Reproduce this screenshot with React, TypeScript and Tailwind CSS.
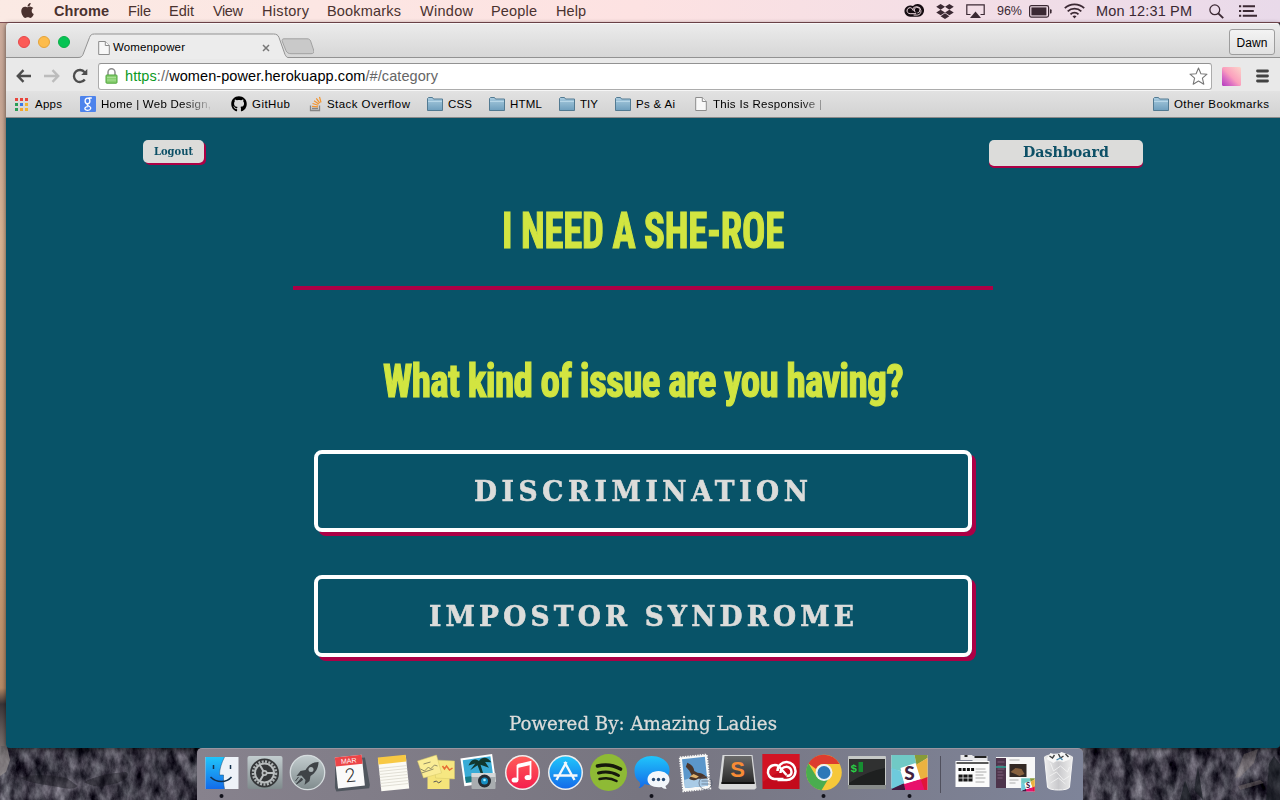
import { useLayoutEffect, useRef } from 'react';
import type { ReactNode } from 'react';
import { FaApple, FaDropbox, FaGithub } from 'react-icons/fa';

/* Text set to an exact measure: `squeeze` narrows the glyphs, tracking takes up the rest.
   Without `squeeze` and with `scale`, the glyphs alone are narrowed. */
function Fit({ width, squeeze = 1, scale = false, className = '', children }: {
  width: number;
  squeeze?: number;
  scale?: boolean;
  className?: string;
  children: ReactNode;
}) {
  const ref = useRef<HTMLSpanElement>(null);
  useLayoutEffect(() => {
    const el = ref.current;
    if (!el) return;
    el.style.letterSpacing = scale ? '' : '0px';
    el.style.transform = 'none';
    const natural = el.getBoundingClientRect().width;
    if (scale) {
      el.style.transform = `scaleX(${width / natural})`;
      return;
    }
    const count = Math.max(1, (el.textContent ?? '').length - 1);
    el.style.letterSpacing = `${(width / squeeze - natural) / count}px`;
    el.style.transform = squeeze === 1 ? 'none' : `scaleX(${squeeze})`;
  }, [width, squeeze, scale]);
  return (
    <span className={`block shrink-0 ${className}`} style={{ width }}>
      <span ref={ref} className="inline-block origin-left whitespace-pre">{children}</span>
    </span>
  );
}

function Wallpaper() {
  return (
    <svg className="absolute inset-0" width="1280" height="800">
      <defs>
        <linearGradient id="sky" x1="0" y1="0" x2="0" y2="1">
          <stop offset="0" stopColor="#cfae9f" />
          <stop offset=".12" stopColor="#c5a594" />
          <stop offset=".3" stopColor="#d6b190" />
          <stop offset=".6" stopColor="#cfa27a" />
          <stop offset=".86" stopColor="#b58a66" />
          <stop offset=".88" stopColor="#3a3538" />
          <stop offset=".92" stopColor="#6c6260" />
          <stop offset="1" stopColor="#b3a8a2" />
        </linearGradient>
        <filter id="rock" x="0" y="0" width="100%" height="100%" colorInterpolationFilters="sRGB">
          <feTurbulence type="fractalNoise" baseFrequency=".09 .05" numOctaves="5" seed="21" />
          <feColorMatrix values=".8 .05 0 0 -.17  .8 .02 0 0 -.165  .8 .04 0 0 -.13  0 0 0 0 1" />
        </filter>
      </defs>
      <rect width="1280" height="800" fill="#2f303a" />
      <rect width="8" height="800" fill="url(#sky)" />
      <rect y="746" width="1280" height="54" filter="url(#rock)" />
      <path d="M0 746h7l3 14-4 12-6 4z" fill="#a39c9a" opacity=".6" />
      <path d="M20 778c12-4 28-4 46 0 6 3 8 6 12 8-6 4-10 3-20 1s-26-3-38-9zM84 782c14-7 28-9 42-10 4 2 2 8-12 12-10 2-18 5-30-2z" fill="#16171c" opacity=".45" />
      <path d="M1244 754l14-5-4 14-14 14-5 1zM1238 786l22-6 4 3-24 7z" fill="#988d86" opacity=".35" />
      <path d="M1180 800l5-20 7 20zM1194 790l4-24 5 34zM1266 800l3-36 5-8 6 8v36z" fill="#11151a" opacity=".6" />
    </svg>
  );
}

function MenuBar() {
  const items: [string, number, string][] = [
    ['File', 23, 'ml-[19px]'],
    ['Edit', 25, 'ml-[18px]'],
    ['View', 30, 'ml-[19px]'],
    ['History', 47, 'ml-[19px]'],
    ['Bookmarks', 74, 'ml-[18px]'],
    ['Window', 53, 'ml-[19px]'],
    ['People', 46, 'ml-[18px]'],
    ['Help', 30, 'ml-[19px]'],
  ];
  return (
    <header className="relative flex h-[23px] items-center border-b border-[#7f4f55] bg-linear-to-r from-[#fbeae4] via-[#fde2e2] to-[#e9daea] pl-[20px] text-[14.500px] leading-[22px] text-[#4a322f]">
      <FaApple className="h-[17px] w-[15px] shrink-0 -translate-y-px" />
      <Fit width={55} className="ml-[19px] font-bold">Chrome</Fit>
      {items.map(([t, w, m]) => (
        <Fit key={t} width={w} className={m}>{t}</Fit>
      ))}
      <div className="ml-auto flex h-full items-center pr-[22px] text-[#3b2933]">
        <svg width="20" height="14" viewBox="0 0 20 14" fill="none">
          <path d="M13.4 0A6 6 0 0 0 9 2 4.6 4.6 0 0 0 6 1.5a5.6 5.6 0 0 0 0 11.2h8A6.3 6.3 0 0 0 13.4 0z" fill="#160d12" />
          <path d="M12.2 9.7H6.1a3 3 0 1 1 1.6-5.5l4 4.2" stroke="#f1dbe1" strokeWidth="1" />
          <path d="M8.4 6.3a4.3 4.3 0 1 1 5 4.8H9.6M10.4 7a2.8 2.8 0 1 1 3 1.9" stroke="#f1dbe1" strokeWidth=".9" />
        </svg>
        <FaDropbox className="ml-[12px] h-[17px] w-[18px]" />
        <svg className="ml-[12px]" width="19" height="15" viewBox="0 0 19 15">
          <path d="M4.5 10.5H.8V.8h17.4v9.7h-3.7" fill="none" stroke="currentColor" strokeWidth="1.2" />
          <path d="M9.5 7.5 15 14H4z" fill="currentColor" />
        </svg>
        <Fit width={25} className="ml-[12px] text-[12.500px]">96%</Fit>
        <svg className="ml-[7px]" width="23" height="13" viewBox="0 0 23 13">
          <rect x=".6" y=".6" width="19" height="11.5" rx="1.8" fill="none" stroke="currentColor" strokeWidth="1.2" />
          <rect x="2.4" y="2.4" width="15" height="8" fill="currentColor" />
          <path d="M21 4.2h.6a1 1 0 0 1 1 1v2.3a1 1 0 0 1-1 1H21z" fill="currentColor" />
        </svg>
        <svg className="ml-[12px]" width="21" height="16" viewBox="0 0 21 16" fill="none" stroke="currentColor" strokeWidth="1.8">
          <path d="M.8 5.2a14 14 0 0 1 19.4 0M3.7 8.3a9.8 9.8 0 0 1 13.6 0M6.5 11.3a5.8 5.8 0 0 1 8 0" />
          <path d="m10.5 15.5-2-2.2a3 3 0 0 1 4 0z" fill="currentColor" stroke="none" />
        </svg>
        <Fit width={96} className="ml-[11px]">Mon 12:31 PM</Fit>
        <svg className="ml-[17px]" width="15" height="15" viewBox="0 0 15 15" fill="none" stroke="currentColor">
          <circle cx="5.8" cy="5.8" r="4.9" strokeWidth="1.3" />
          <path d="m9.3 9.3 4.9 4.9" strokeWidth="1.9" />
        </svg>
        <svg className="ml-[15px]" width="19" height="12" viewBox="0 0 19 12" fill="currentColor">
          <path d="M0 .3h2.2v2H0zM0 5h2.2v2H0zM0 9.7h2.2v2H0zM3.8.3H16v2H3.8zM3.8 5h11v2h-11zM3.8 9.7H18v2H3.8z" />
        </svg>
      </div>
    </header>
  );
}

function PageIcon({ className = '' }: { className?: string }) {
  return (
    <svg className={`shrink-0 ${className}`} width="12" height="14" viewBox="0 0 12 14" fill="#f8f8f8" stroke="#8c8c8c">
      <path d="M.7.5h6.6l4 4v9H.7z" />
      <path d="M7.3.5v4h4" />
    </svg>
  );
}

function Folder({ className = '' }: { className?: string }) {
  return (
    <svg className={`shrink-0 ${className}`} width="16" height="14" viewBox="0 0 16 14">
      <defs>
        <linearGradient id="folder" x1="0" y1="0" x2="0" y2="1">
          <stop offset="0" stopColor="#a9cbdf" />
          <stop offset="1" stopColor="#6f9fbd" />
        </linearGradient>
      </defs>
      <path d="M.5 13.5v-12l1-1h4l1 1.5h9v11.500z" fill="url(#folder)" stroke="#527a92" />
      <path d="M1 4.500h14" stroke="#b8d7e8" />
    </svg>
  );
}

function TabStrip() {
  return (
    <div className="flex h-[35px] bg-linear-to-b from-[#ececec] to-[#d6d6d6] shadow-[inset_0_-1px_0_#929292,inset_0_1px_0_#f8f8f8]">
      <div className="flex items-center gap-[8px] pt-[3px] pl-[12px]">
        <i className="size-[12px] rounded-full border border-[#e6484a] bg-[#fc5b57]" />
        <i className="size-[12px] rounded-full border border-[#e5a33a] bg-[#fdbc4c]" />
        <i className="size-[12px] rounded-full border border-[#0cae48] bg-[#06c454]" />
      </div>
      <div className="relative ml-[4px] h-[36px] w-[214px]">
        <svg className="absolute inset-0" width="214" height="36">
          <path d="M4 34.500c3 0 4-1 5-3L15.500 14.500c1-2.500 2-3.500 5-3.500h179c3 0 4.500 1 5.500 3.500l6 17c1 2 2 3 3 3v1.500H4z" fill="#ececec" />
          <path d="M4 34.500c3 0 4-1 5-3L15.500 14.500c1-2.500 2-3.500 5-3.500h179c3 0 4.500 1 5.500 3.500l6 17c1 2 2 3 3 3" fill="none" stroke="#929292" />
        </svg>
        <div className="relative flex h-full items-center pt-[13px] pl-[24px]">
          <PageIcon />
          <Fit width={72} className="ml-[3px] text-[11.500px] text-black">Womenpower</Fit>
          <svg className="ml-[77px]" width="8" height="8" viewBox="0 0 8 8" stroke="#777" strokeWidth="1.500">
            <path d="m1 1 6 6M7 1 1 7" />
          </svg>
        </div>
      </div>
      <svg className="mt-[15px] -ml-[7px]" width="33" height="18" viewBox="0 0 33 18">
        <path d="M3 .800h23c2 0 3 .700 3.600 2.200l3 9c.700 2.500 0 3.700-2.600 3.700H10c-2.500 0-4-1-5-3L1.500 4C.600 2 1.200.800 3 .800z" fill="#c9c9c9" stroke="#a1a1a1" />
      </svg>
      <div className="mt-[6px] mr-[5px] ml-auto flex h-[26px] w-[46px] items-center justify-center rounded-[3px] border border-[#9d9d9d] bg-linear-to-b from-[#f3f3f3] to-[#e2e2e2] pt-px">
        <Fit width={31} className="text-[12px] text-black">Dawn</Fit>
      </div>
    </div>
  );
}

function Toolbar() {
  return (
    <div className="flex h-[33px] items-center bg-[#e9e9e9] pt-[3px] pl-[10px]">
      <svg width="16" height="14" viewBox="0 0 16 14" fill="none" stroke="#4d4d4d" strokeWidth="2.400">
        <path d="M15 7H2M7.500 1.200 1.800 7l5.700 5.800" />
      </svg>
      <svg className="ml-[12px]" width="16" height="14" viewBox="0 0 16 14" fill="none" stroke="#bcbcbc" strokeWidth="2.400">
        <path d="M0 7h14M8.500 1.200 14.200 7l-5.700 5.800" />
      </svg>
      <svg className="ml-[12px]" width="16" height="16" viewBox="0 0 16 16">
        <path d="M12.800 11.500a6 6 0 1 1-.200-7.300" fill="none" stroke="#4d4d4d" strokeWidth="2.300" />
        <path d="M15.300.900V7H9.200z" fill="#4d4d4d" />
      </svg>
      <div className="ml-[10px] flex h-[27px] w-[1114px] items-center rounded-[3px] border border-[#acacac] border-t-[#929292] bg-white pl-[6px] shadow-[0_1px_0_#f6f6f6]">
        <svg width="13" height="16" viewBox="0 0 13 16">
          <path d="M3 7.500V4.200a3.500 3.500 0 0 1 7 0v3.300" fill="none" stroke="#8d8d8d" strokeWidth="1.500" />
          <rect x="1" y="7" width="11" height="8.200" rx=".8" fill="#88cf70" stroke="#4fa53c" />
          <path d="M2 9.500h9M2 12h9" stroke="#a8df94" />
        </svg>
        <Fit width={313} className="ml-[7px] pt-px text-[14.500px] text-[#666]">
          <span className="text-[#0b9a24]">https</span>://<span className="text-black">women-power.herokuapp.com</span>/#/category
        </Fit>
        <svg className="mr-[3px] ml-auto" width="19" height="19" viewBox="0 0 19 19" fill="#fff" stroke="#777" strokeWidth="1.100" strokeLinejoin="round">
          <path d="m9.500 1 2.400 5.700 6.100.500-4.600 4 1.400 6-5.300-3.200-5.300 3.200 1.400-6L1 7.200l6.100-.500z" />
        </svg>
      </div>
      <svg className="ml-[10px]" width="19" height="19" viewBox="0 0 19 19">
        <defs>
          <linearGradient id="swatch" x1="0" y1="1" x2="1" y2="0">
            <stop offset="0" stopColor="#b13ac0" />
            <stop offset=".3" stopColor="#dd70c3" />
            <stop offset=".5" stopColor="#fb9fbd" />
            <stop offset="1" stopColor="#fcd5ca" />
          </linearGradient>
        </defs>
        <rect width="19" height="19" rx="1.500" fill="url(#swatch)" />
      </svg>
      <svg className="ml-[15px]" width="13" height="14" viewBox="0 0 13 14" stroke="#424242" strokeWidth="2.800" strokeLinecap="round">
        <path d="M1.500 2h10M1.500 7h10M1.500 12h10" />
      </svg>
    </div>
  );
}

function BookmarksBar() {
  const folders: [string, number, string][] = [
    ['CSS', 24, 'ml-[17px]'],
    ['HTML', 32, 'ml-[17px]'],
    ['TIY', 18, 'ml-[17px]'],
    ['Ps & Ai', 39, 'ml-[17px]'],
  ];
  const dots = ['#e8453c', '#e8453c', '#e8453c', '#2a9d57', '#3b78e7', '#f3b52f', '#2a9d57', '#f3a52f', '#f3b52f'];
  return (
    <div className="flex h-[27px] items-center border-b border-[#8a8a8a] bg-linear-to-b from-[#e2e2e2] to-[#d2d2d2] pr-[11px] pl-[9px] text-[11.500px] text-black">
      <svg width="13" height="13" viewBox="0 0 13 13">
        {dots.map((c, i) => (
          <rect key={i} x={(i % 3) * 5} y={Math.floor(i / 3) * 5} width="3" height="3" fill={c} />
        ))}
      </svg>
      <Fit width={27} className="ml-[7px] pt-px">Apps</Fit>
      <svg className="ml-[18px] shrink-0" width="16" height="16" viewBox="0 0 16 16">
        <rect width="16" height="16" rx="1" fill="#4d83ec" />
        <g fill="none" stroke="#fff" strokeWidth="1.300">
          <ellipse cx="7.500" cy="5" rx="2.400" ry="2.800" />
          <path d="M11.800 2H8.500M8.300 7.600c-2 .900-1.300 1.700.400 2.400 3.200 1.300 2.300 4.300-1 4.300-3.800 0-3.900-3.600.500-3.700" />
        </g>
      </svg>
      <Fit width={110} className="ml-[5px] bg-linear-to-r from-black from-75% to-black/10 bg-clip-text pt-px text-transparent">Home | Web Design,</Fit>
      <FaGithub className="ml-[20px] size-[16px] shrink-0" />
      <Fit width={38} className="ml-[5px] pt-px">GitHub</Fit>
      <svg className="ml-[19px] shrink-0" width="13" height="16" viewBox="0 0 13 16" fill="none">
        <path d="M1.500 9.500v5h9v-5" stroke="#858585" strokeWidth="1.300" />
        <path d="M3 12.500h6" stroke="#858585" strokeWidth="1.300" />
        <path d="m3 10.300 6 .600M3.500 7.500l5.700 1.700M5 4.800 9.800 8M7.300 2.300l3.500 4.900M10.500.800l1.500 5.700" stroke="#f2932e" strokeWidth="1.200" />
      </svg>
      <Fit width={83} className="ml-[5px] pt-px">Stack Overflow</Fit>
      {folders.map(([t, w, m]) => (
        <div key={t} className={`flex items-center ${m}`}>
          <Folder />
          <Fit width={w} className="ml-[5px] pt-px">{t}</Fit>
        </div>
      ))}
      <PageIcon className="ml-[20px]" />
      <Fit width={109} className="ml-[6px] bg-linear-to-r from-black from-80% to-black/30 bg-clip-text pt-px text-transparent">This Is Responsive |</Fit>
      <Folder className="ml-auto" />
      <Fit width={95} className="ml-[5px] pt-px">Other Bookmarks</Fit>
    </div>
  );
}

function CategoryPage() {
  return (
    <main className="flex flex-1 flex-col items-center bg-[#085368] font-['DejaVu_Serif',serif]">
      <div className="mt-[22px] flex h-[26px] w-[1000px] items-start justify-between">
        <button className="flex h-[23px] w-[61px] items-center justify-center rounded-[5px] bg-[#dcdcda] pb-px font-bold text-[#0d5066] shadow-[2px_2px_0_#ac0045]">
          <Fit width={39} scale className="text-[10.500px] leading-none">Logout</Fit>
        </button>
        <button className="flex h-[26px] w-[154px] items-center justify-center rounded-[5px] bg-[#dcdcda] pb-[2px] font-bold text-[#0d5066] shadow-[0_2px_0_#ac0045]">
          <Fit width={86} scale className="text-[15.500px] leading-none">Dashboard</Fit>
        </button>
      </div>
      <h1 className="mt-[35px] font-['Roboto_Condensed','Liberation_Sans_Narrow',Roboto,sans-serif] text-[50px] leading-[60px] font-bold tracking-[-.3px] text-[#d2e541] [-webkit-text-stroke:1.200px_#d2e541]">
        <Fit width={282} scale>I NEED A SHE-ROE</Fit>
      </h1>
      <hr className="mt-[25px] h-[4px] w-[700px] border-0 bg-[#ac0045]" />
      <h2 className="mt-[64px] font-['Roboto_Condensed','Liberation_Sans_Narrow',Roboto,sans-serif] text-[45.500px] leading-[56px] font-bold tracking-[-.8px] text-[#d2e541] [-webkit-text-stroke:1.200px_#d2e541]">
        <Fit width={520} scale>What kind of issue are you having?</Fit>
      </h2>
      <button className="mt-[40px] flex h-[82px] w-[658px] items-center justify-center rounded-[8px] border-4 border-white pr-[4px] font-bold text-[#dcdcda] shadow-[4px_4px_0_#ac0045]">
        <Fit width={334} squeeze={0.93} className="text-[28.500px] [-webkit-text-stroke:.6px_#dcdcda]">DISCRIMINATION</Fit>
      </button>
      <button className="mt-[43px] flex h-[82px] w-[658px] items-center justify-center rounded-[8px] border-4 border-white pr-[4px] font-bold text-[#dcdcda] shadow-[4px_4px_0_#ac0045]">
        <Fit width={425} squeeze={0.93} className="text-[28.500px] [-webkit-text-stroke:.6px_#dcdcda]">IMPOSTOR SYNDROME</Fit>
      </button>
      <footer className="mt-[52px] text-[18.500px] leading-[30px] text-[#dcdcda]">
        <Fit width={268} scale className="[-webkit-text-stroke:.3px_#dcdcda]">Powered By: Amazing Ladies</Fit>
      </footer>
    </main>
  );
}

function Slot({ running = false, children }: { running?: boolean; children: ReactNode }) {
  return (
    <svg className="shrink-0" width="43" height="52" viewBox="-21.500 0 43 52">
      {children}
      {running && <circle cx="0" cy="48" r="2" fill="#11111a" />}
    </svg>
  );
}

function SlackMark() {
  return (
    <g>
      <path d="M-18 7H18V42H-18z" fill="#fff" />
      <path d="M-18 7H5L7 17-9 23-18 21z" fill="#70c9c5" />
      <path d="M5 7h13v3L7 17z" fill="#879b38" />
      <path d="M18 10v20l-7 2L6 17z" fill="#ecb240" />
      <path d="M18 29v13H14L10 32z" fill="#e01538" />
      <path d="M15 42H-4l-3-6 18-5z" fill="#e8116c" />
      <path d="M-4 42h-14v-2l12-5z" fill="#421a40" />
      <path d="M-18 20l9 3 4 12-13 6z" fill="#6ecadc" />
      <path d="M-9 20 6 15l5 16-16 5z" fill="#fff" />
    </g>
  );
}

function Dock() {
  return (
    <div className="flex h-[52px] w-[886px] rounded-t-[5px] border-t border-[#9995a0] bg-linear-to-r from-[#87828d] via-[#777580] to-[#7e8499] pl-[2.500px] *:-mt-px">
      <svg width="0" height="0" className="absolute">
        <defs>
          <linearGradient id="blue" x1="0" y1="0" x2="0" y2="1"><stop offset="0" stopColor="#20c5fb" /><stop offset="1" stopColor="#136be9" /></linearGradient>
          <linearGradient id="metal" x1="0" y1="0" x2="0" y2="1"><stop offset="0" stopColor="#c3cdcf" /><stop offset="1" stopColor="#808b8d" /></linearGradient>
          <linearGradient id="red" x1="0" y1="0" x2="0" y2="1"><stop offset="0" stopColor="#ff5c58" /><stop offset="1" stopColor="#f51f4d" /></linearGradient>
          <linearGradient id="dark" x1="0" y1="0" x2="0" y2="1"><stop offset="0" stopColor="#6b6b6b" /><stop offset="1" stopColor="#252525" /></linearGradient>
          <linearGradient id="bin" x1="0" y1="0" x2="1" y2="0"><stop offset="0" stopColor="#eee" /><stop offset=".5" stopColor="#c9c9cc" /><stop offset="1" stopColor="#eee" /></linearGradient>
        </defs>
      </svg>
      <Slot running>
        <rect x="-16" y="9" width="33" height="32" fill="#eef2f8" />
        <path d="M-16 9H3C0 15-2 21-2 27h4c0 5 0 9 1 14h-19z" fill="url(#blue)" />
        <path d="M-8 17v4M9 17v4" stroke="#12304c" strokeWidth="1.500" />
        <path d="M3 9c-3 6-5 12-5 18h4c0 5 0 9 1 14" fill="none" stroke="#1b4b70" strokeWidth=".5" />
        <path d="M-11 29c6 6 16 6 21 0" fill="none" stroke="#12304c" strokeWidth="1.500" />
      </Slot>
      <Slot>
        <rect x="-17" y="8" width="35" height="33" rx="2" fill="url(#metal)" />
        <circle cy="25" r="14.500" fill="#353739" />
        <circle cy="25" r="11.500" fill="none" stroke="#aeb3b4" strokeWidth="2.500" strokeDasharray="2 1.400" />
        <circle cy="25" r="9.500" fill="none" stroke="#b9bdbe" strokeWidth="2" />
        <circle cy="25" r="3" fill="#b9bdbe" />
        <path d="M0 25h10M0 25l-5-8.500M0 25l-5 8.500" stroke="#b9bdbe" strokeWidth="2" />
        <circle cy="25" r="1.300" fill="#444" />
      </Slot>
      <Slot>
        <circle cy="24.500" r="17.200" fill="url(#metal)" stroke="#d6dcde" strokeWidth="1.300" />
        <path d="M11 14c-6 0-10 3-13 8l-5 1-4 5 5-.5 4 4.500-1 5 5-4 1-5c5-3 8-8 8-14z" fill="#3f4347" />
        <circle cx="3.500" cy="21.500" r="2.500" fill="#aab3b5" />
        <path d="m-6 30-5 6 6-4zM-9 29l-3 4" fill="#3f4347" stroke="#3f4347" />
      </Slot>
      <Slot>
        <g transform="rotate(-6 0 25)">
          <path d="M-14 11h30l2 28-1 3h-33l-1-4z" fill="#50565e" />
          <rect x="-14" y="8" width="27" height="31" fill="#fafafa" />
          <rect x="-14" y="8" width="27" height="9" fill="#ec4548" />
          <text x="-.5" y="15.200" fontSize="7" textAnchor="middle" fill="#fff" fontFamily="Liberation Sans">MAR</text>
          <text x="-.5" y="34" fontSize="19" textAnchor="middle" fill="#333" fontFamily="Roboto" fontWeight="300">2</text>
        </g>
      </Slot>
      <Slot>
        <g transform="rotate(-6 0 25)">
          <rect x="-14" y="9" width="28" height="33" fill="#fbfaf4" />
          <rect x="-14" y="8" width="28" height="7" fill="#f8c944" />
          <path d="M-14 19h28m-28 3h28m-28 3h28m-28 3h28m-28 3h28m-28 3h28m-28 3h28" stroke="#d7d5ca" strokeWidth=".7" />
        </g>
      </Slot>
      <Slot>
        <path d="M-9 26h22v15H-9z" fill="#f5e47a" />
        <path d="m-2 12 20 1v18l-19-1z" fill="#f6e781" stroke="#d5c768" strokeWidth=".5" />
        <path d="m-19 13 19-6 5 18-18 5z" fill="#faec95" stroke="#d5c768" strokeWidth=".5" />
        <path d="m-13 16 7-2M-16 21l4 2 4-4 2 2 4-4 3 1M-15 25l12-4" fill="none" stroke="#77745a" strokeWidth=".8" />
        <path d="m6 18 2 3 2-3 3 4 3-2" fill="none" stroke="#e76c35" strokeWidth="1.500" />
        <path d="m-3 34 3-1 2 2 3-2" fill="none" stroke="#555" />
      </Slot>
      <Slot>
        <g transform="rotate(-8 0 24)">
          <rect x="-17" y="8" width="32" height="28" fill="#fff" />
          <rect x="-15" y="10" width="28" height="21" fill="#39abd6" />
          <path d="M-15 27h28v6h-28z" fill="#187884" />
          <path d="M1 13c-6-5-9 0-11 3l7-1-6 6 8-4 3 13 2-1-2-12 8 4-3-6 6 1c-3-6-8-7-12-3z" fill="#11382f" />
        </g>
        <rect x="-8" y="25" width="24" height="16" rx="1" fill="#a9adb0" />
        <path d="M-8 25h24v4H-8z" fill="#d6d8d9" />
        <circle cx="5" cy="33" r="6.500" fill="#252b32" />
        <circle cx="5" cy="33" r="3.500" fill="#168fc4" />
        <circle cx="5" cy="32" r="1.300" fill="#b1efff" />
      </Slot>
      <Slot>
        <circle cy="24.500" r="17.500" fill="#eee" />
        <circle cy="24.500" r="16" fill="url(#red)" />
        <path d="m-5 17 13-3v15M-5 17v15" fill="none" stroke="#fff" strokeWidth="1.800" />
        <path d="m-5 17 13-3v3l-13 3z" fill="#fff" />
        <ellipse cx="-7.500" cy="32" rx="3.400" ry="2.600" fill="#fff" />
        <ellipse cx="5.500" cy="29.500" rx="3.400" ry="2.600" fill="#fff" />
      </Slot>
      <Slot>
        <circle cy="24.500" r="17.500" fill="#eee" />
        <circle cy="24.500" r="16" fill="url(#blue)" />
        <path d="m1 14-10 18M-1 14l10 18M-12 27.500H12" fill="none" stroke="#f3f8fb" strokeWidth="2.400" />
      </Slot>
      <Slot>
        <circle cy="24.500" r="18.500" fill="#8eba35" />
        <path d="M-11 18c8-2 16-1 23 3" fill="none" stroke="#16190c" strokeWidth="3.600" strokeLinecap="round" />
        <path d="M-10 25c7-2 14-1 20 2.500" fill="none" stroke="#16190c" strokeWidth="3" strokeLinecap="round" />
        <path d="M-9 31c6-1.500 12-1 17 2" fill="none" stroke="#16190c" strokeWidth="2.500" strokeLinecap="round" />
      </Slot>
      <Slot running>
        <path d="M0 8c10 0 18 6 18 14S10 37 0 37c-3 0-5-.3-7-1-1 2-3 4-6 4 2-2 2-4 1-6-4-3-5-7-5-12C-17 14-9 8 0 8z" fill="url(#blue)" />
        <path d="M7 23c6 0 11 3.500 11 8.500 0 3-1.500 5-4 6.500 0 1 1 2 1 3-2 0-4-1-5-2-8 1-14-2-14-7.500C-4 26.500 1 23 7 23z" fill="#f3f7fb" />
        <g fill="#264971"><circle cx="2" cy="31.500" r="1.700" /><circle cx="7" cy="31.500" r="1.700" /><circle cx="12" cy="31.500" r="1.700" /></g>
      </Slot>
      <Slot>
        <g transform="rotate(-6 0 25)">
          <rect x="-13" y="8" width="27" height="34" fill="#f9f9f7" stroke="#f9f9f7" strokeWidth="2" strokeDasharray="1.500 1" />
          <rect x="-11" y="10" width="23" height="29" fill="#5b97cb" />
          <path d="M-11 31q12-4 23 0v8h-23z" fill="#a9cbe6" />
          <path d="M-6 14c4 2 6 5 6 9l3 2c5 1 7 3 10 7-4-1-7 0-10-1-4 2-7 1-9-1l3-3-2-5-3-4z" fill="#4b3529" />
          <path d="m-5 28 4-2 5 3-3 1.500z" fill="#e0b26c" />
        </g>
        <circle cx="11" cy="35" r="6.500" fill="none" stroke="#4c5667" opacity=".6" />
        <path d="M7 33h8m-8 3h8" stroke="#4c5667" opacity=".6" />
      </Slot>
      <Slot>
        <path d="M-15 7h30l4 33-2 1.500h-34L-19 40z" fill="#d7d8d9" />
        <path d="M-13 8h27l3 28h-33z" fill="url(#dark)" />
        <path d="M-16 34h33v2h-33z" fill="#111" />
        <text x="0" y="28.500" fontSize="22" textAnchor="middle" fill="#f78b35" fontFamily="Liberation Sans" fontWeight="700">S</text>
      </Slot>
      <Slot>
        <rect x="-18" y="6" width="37" height="35" fill="#c30a1c" />
        <path d="M-18 6h37v14q-18 0-37 14z" fill="#e21d2c" opacity=".5" />
        <path d="M3 31h-9a7 7 0 1 1 4-13l8 9" fill="none" stroke="#fff" strokeWidth="2.500" />
        <path d="M-3 23a9 9 0 1 1 8 9h-8M0 25c0-8 11-8 11-1 0 3-2 4-5 4" fill="none" stroke="#fff" strokeWidth="2.500" />
      </Slot>
      <Slot running>
        <circle cx=".5" cy="24.500" r="17.800" fill="#f6c83a" />
        <path d="M-15 15.500A17.800 17.800 0 0 1 16 16H0a8.500 8.500 0 0 0-7.500 5z" fill="#dd3c2e" />
        <path d="M-15 15.500A17.800 17.800 0 0 0-2 42.200l7.500-12.500a8.500 8.500 0 0 1-12.500-1z" fill="#4aad4f" />
        <circle cx=".5" cy="24.500" r="8.500" fill="#eef2f4" />
        <circle cx=".5" cy="24.500" r="6.500" fill="#2d78b8" />
      </Slot>
      <Slot>
        <rect x="-18.500" y="8" width="38" height="33" rx="1" fill="#c6c9c7" />
        <rect x="-17.500" y="11" width="36" height="26" fill="#1e2020" />
        <path d="M-17.500 11h36v9q-18 3-36 15z" fill="#3c3e3d" opacity=".6" />
        <path d="M-18.500 37h38v4h-38z" fill="#878b8a" />
        <text x="-16" y="23.500" fontSize="11" fill="#29cf45" fontFamily="Liberation Mono" fontWeight="700">$</text>
        <rect x="-8" y="14" width="4.500" height="10" fill="#168e31" />
      </Slot>
      <Slot running>
        <SlackMark />
        <text x="0" y="32" fontSize="19" textAnchor="middle" fill="#43213f" fontFamily="Lato" fontWeight="900">S</text>
      </Slot>
      <div className="flex w-[20px] shrink-0 justify-center pt-[8px]">
        <div className="h-[37px] w-px bg-[#50505d]" />
      </div>
      <Slot>
        <path d="M-12 7H0v5h-12zM0 8h15v6H0z" fill="#e8e8ea" />
        <path d="M2 9h12M-8 8h3" stroke="#222" strokeWidth="2" />
        <rect x="-17" y="13" width="34" height="26" fill="#fbfbfb" />
        <path d="M-16 15h32" stroke="#222" strokeWidth="1.500" />
        <path d="M-14 21.500h16" stroke="#111" strokeWidth="3" strokeDasharray="3 1.200" />
        <path d="M-14 26.500H0v7h-14z" fill="#161616" />
        <path d="M-9.500 26v8M-4.500 26v8M-14 30H0" stroke="#eee" strokeWidth=".8" />
        <path d="M3 21h10m-10 3h11m-11 3h8m-8 3h10m-10 4h9" stroke="#aaa" />
      </Slot>
      <Slot>
        <rect x="-19.500" y="9" width="39" height="31" fill="#f7f7f7" />
        <path d="M-19.500 10h10v30h-10z" fill="#4d344b" />
        <path d="M-18 14h7m-7 4h6m-6 3h7m-7 3h5m-5 3h6m-6 3h5" stroke="#8b6a87" strokeWidth=".8" />
        <path d="M-19.500 19h10" stroke="#2fa393" strokeWidth="1.500" />
        <rect x="-6" y="16" width="17" height="13" fill="#332925" />
        <path d="M-5 24l5-4 6 1 3 5-5 2z" fill="#87613f" />
        <path d="M-6 12h10m-10 20h9m-9 3h6" stroke="#999" strokeWidth=".8" />
        <g transform="translate(12.500 27.500) scale(.38)">
          <SlackMark />
          <text x="0" y="32" fontSize="20" textAnchor="middle" fill="#43213f" fontFamily="Lato" fontWeight="900">S</text>
        </g>
      </Slot>
      <Slot>
        <path d="M-14 9h28l-3 30c-.3 4-21.500 4-22 0z" fill="url(#bin)" stroke="#f6f6f6" />
        <path d="m-8 15 3 8 7-5 7 6 2-5M-9 28l7-4 7 8 6-4M-8 35l8-5 7 6" fill="none" stroke="#f5f5f5" opacity=".8" />
        <ellipse cy="9.500" rx="14.200" ry="4" fill="#e6e6e6" />
        <path d="m-12 11 4-6 6 2 5-3 8 3 1 4-7 3-6-2-4 3z" fill="#f7f7f7" />
        <path d="m-9 8 3 2 2-3m4-1 2 4 3-2m2-2 3 3" fill="none" stroke="#3f4142" strokeWidth="1.400" />
        <path d="m-2 12 4-2 2 2" fill="none" stroke="#4889ad" strokeWidth="1.300" />
      </Slot>
    </div>
  );
}

export default function App() {
  return (
    <div className="relative flex h-[800px] w-[1280px] flex-col overflow-hidden font-['Liberation_Sans',Arial,sans-serif]">
      <Wallpaper />
      <MenuBar />
      <div className="relative ml-[6px] flex h-[725px] flex-col overflow-hidden rounded-[4px] shadow-[0_1px_5px_rgba(0,0,0,.6)]">
        <TabStrip />
        <Toolbar />
        <BookmarksBar />
        <CategoryPage />
      </div>
      <div className="relative flex pl-[197px]">
        <Dock />
      </div>
    </div>
  );
}
